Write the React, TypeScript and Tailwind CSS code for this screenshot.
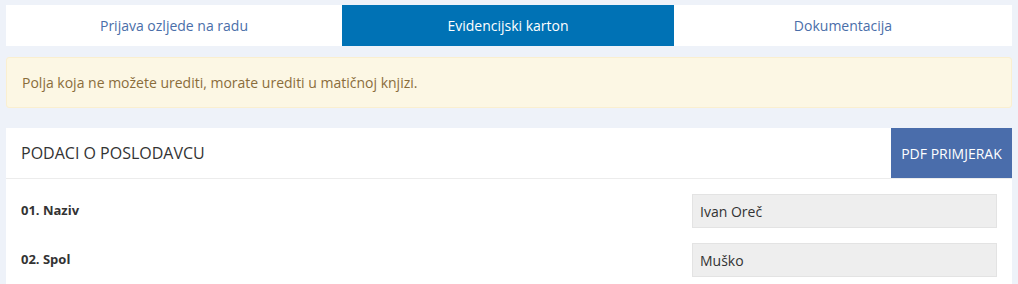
const tabs = ["Prijava ozljede na radu", "Evidencijski karton", "Dokumentacija"];

const fields = [
  { label: "01. Naziv", value: "Ivan Oreč" },
  { label: "02. Spol", value: "Muško" },
];

export default function App() {
  return (
    <div className="h-[284px] overflow-hidden bg-[#eef2f9] px-[6px] pt-[5px] font-['Open_Sans',sans-serif] text-[#333]">
      <div className="grid grid-cols-[336px_332px_1fr] h-[41px]">
        {tabs.map((tab, i) => (
          <div
            key={tab}
            className={
              i === 1
                ? "flex items-center justify-center bg-[#0072b5] text-white text-[14px]"
                : "flex items-center justify-center bg-white text-[#4a6ea9] text-[14px]"
            }
          >
            {tab}
          </div>
        ))}
      </div>

      <div className="mt-[11px] h-[51px] flex items-center px-[15px] rounded-[3px] border border-[#faefd0] bg-[#fcf7e4] text-[14px] text-[#8a6d3b]">
        Polja koja ne možete urediti, morate urediti u matičnoj knjizi.
      </div>

      <div className="mt-[20px] bg-white pb-[40px]">
        <div className="flex items-stretch justify-between h-[51px] border-b border-[#ececec]">
          <h2 className="flex items-center pl-[15px] text-[16px] text-[#333]">
            PODACI O POSLODAVCU
          </h2>
          <button className="w-[121px] bg-[#4a6dab] text-white text-[14px]">
            PDF PRIMJERAK
          </button>
        </div>
        <div className="pt-[15px]">
          {fields.map((f) => (
            <div key={f.label} className="flex items-center h-[34px] mb-[15px] pl-[15px] pr-[15px]">
              <span className="flex-1 text-[13px] font-bold text-[#333]">{f.label}</span>
              <div className="w-[305px] h-[34px] flex items-center px-[7px] bg-[#eeeeee] border border-[#e3e3e3] text-[14px] text-[#333]">
                {f.value}
              </div>
            </div>
          ))}
        </div>
      </div>
    </div>
  );
}
